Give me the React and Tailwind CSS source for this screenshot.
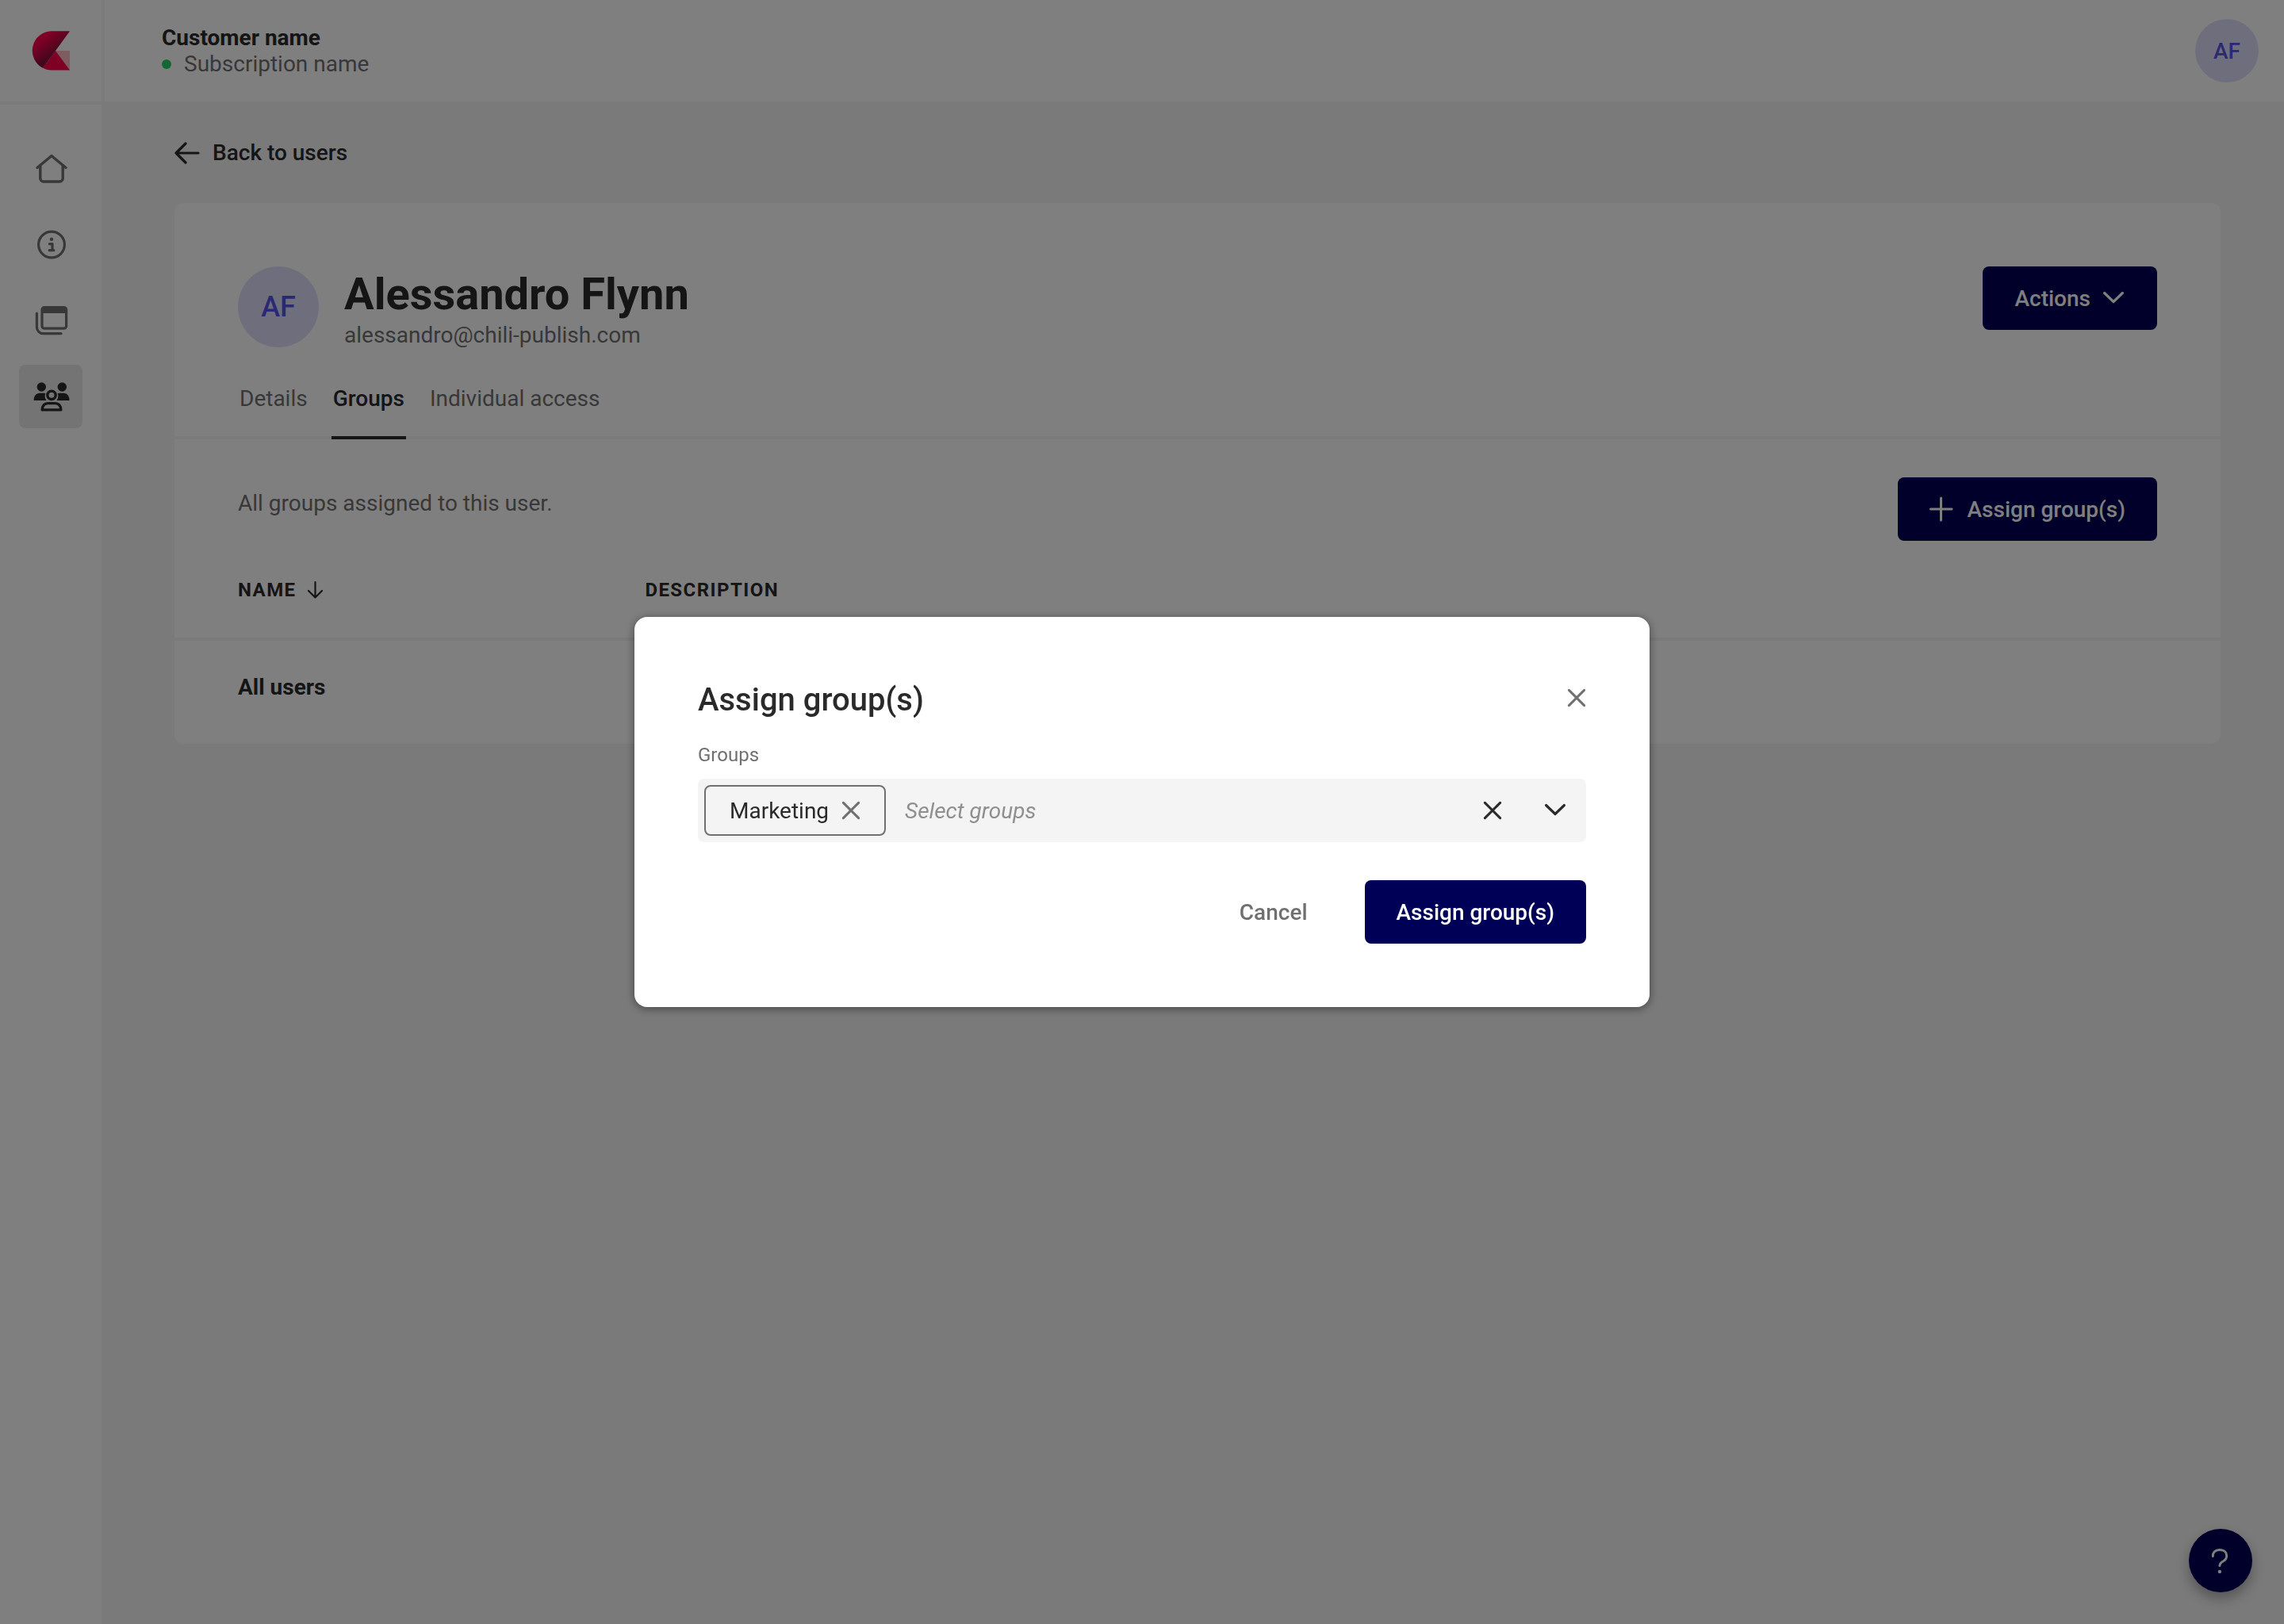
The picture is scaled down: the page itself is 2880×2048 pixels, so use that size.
import React, { useState } from "react";

const navItems = [
    { id: "home", label: "Home", icon: HomeIcon },
    { id: "info", label: "Information", icon: InfoIcon },
    { id: "environments", label: "Environments", icon: WindowsIcon },
    { id: "users", label: "Users", icon: UsersIcon },
];

const tabs = ["Details", "Groups", "Individual access"];

const rows = [{ name: "All users", description: "" }];

function Logo() {
    return (
        <svg className="h-[50px] w-12" viewBox="0 0 48 50" fill="none" aria-hidden="true">
            <defs>
                <linearGradient id="logo-fold" x1="8" y1="10" x2="25" y2="32" gradientUnits="userSpaceOnUse">
                    <stop offset="0.15" stopColor="#ff004b" />
                    <stop offset="1" stopColor="#86103c" />
                </linearGradient>
            </defs>
            <path d="M30 25H48V50Z" fill="#ff7f96" fillOpacity="0.55" />
            <path d="M30 25L48 49.500H24.500C20.500 49.500 17 48.500 14 46.500Z" fill="#ff004b" />
            <path d="M24.700 0.300H48L30 25L14 46.700A24.600 24.600 0 0 1 24.700 0.300Z" fill="url(#logo-fold)" />
        </svg>
    );
}

function HomeIcon() {
    return (
        <svg className="size-12" viewBox="0 0 48 48" fill="none" stroke="currentColor" strokeWidth="3.4" strokeLinecap="round" strokeLinejoin="round" aria-hidden="true">
            <path d="M7 23.500L25 8.500L43 23.500" />
            <path d="M10.800 20.500V37A4 4 0 0 0 14.800 41H35.200A4 4 0 0 0 39.200 37V20.500" />
        </svg>
    );
}

function InfoIcon() {
    return (
        <svg className="size-12" viewBox="0 0 48 48" fill="none" stroke="currentColor" strokeWidth="3.200" strokeLinecap="round" strokeLinejoin="round" aria-hidden="true">
            <circle cx="25" cy="24.500" r="16.400" />
            <path d="M22.400 23.700H26V31.700M22.200 31.700H27.800" />
            <circle cx="25" cy="17.700" r="2.200" fill="currentColor" stroke="none" />
        </svg>
    );
}

function WindowsIcon() {
    return (
        <svg className="size-12" viewBox="0 0 48 48" fill="none" stroke="currentColor" strokeWidth="3.200" strokeLinecap="round" aria-hidden="true">
            <rect x="13" y="7.600" width="30.600" height="26.600" rx="3" />
            <path d="M13 10.500A3 3 0 0 1 16 7.500H40.600A3 3 0 0 1 43.600 10.500V15H13Z" fill="currentColor" stroke="none" />
            <path d="M6.400 15V32.500A8.200 8.200 0 0 0 14.600 40.700H37" />
        </svg>
    );
}

function UsersIcon() {
    return (
        <svg className="size-12" viewBox="0 0 48 48" fill="currentColor" aria-hidden="true">
            <circle cx="12.300" cy="12" r="5.700" />
            <circle cx="38.300" cy="12" r="5.700" />
            <path d="M2.700 29C2.500 23.500 5.500 19.700 10 19.700H14.500C16 19.700 17.300 20 17.300 20C16 23.500 16.700 26.300 18.500 29Z" />
            <path d="M47.500 29C47.700 23.500 44.700 19.700 40.200 19.700H35.700C34.200 19.700 32.700 20 32.700 20C34 23.500 33.300 26.300 31.500 29Z" />
            <circle cx="25" cy="22.300" r="5.200" fill="none" stroke="currentColor" strokeWidth="3.400" />
            <path d="M13.200 40.900C13.200 35.500 16.500 32.600 20 32.600H30C33.500 32.600 36.800 35.500 36.800 40.900Z" fill="none" stroke="currentColor" strokeWidth="3.400" strokeLinejoin="round" />
        </svg>
    );
}

function CloseIcon() {
    return (
        <svg className="size-6" viewBox="0 0 24 24" fill="none" stroke="currentColor" strokeWidth="3" strokeLinecap="round" aria-hidden="true">
            <path d="M2.400 2.400L21.600 21.600M21.600 2.400L2.400 21.600" />
        </svg>
    );
}

function ChevronIcon() {
    return (
        <svg className="size-7" viewBox="0 0 28 28" fill="none" stroke="currentColor" strokeWidth="3.200" strokeLinecap="round" strokeLinejoin="round" aria-hidden="true">
            <path d="M1.600 7.500L13 18.500L24.400 7.500" />
        </svg>
    );
}

function Avatar({ className }) {
    return (
        <span className={`flex shrink-0 items-center justify-center rounded-full bg-[#dfddfb] font-medium text-[#5852e8] ${className}`}>
            AF
        </span>
    );
}

function Sidebar() {
    return (
        <aside className="w-32 shrink-0 bg-white">
            <div className="flex h-[132px] items-center justify-center border-b-4 border-[#f4f4f4]">
                <Logo />
            </div>
            <nav className="flex flex-col items-center gap-4 pt-10">
                {navItems.map((item) => {
                    const Icon = item.icon;
                    const active = item.id === "users";
                    return (
                        <a
                            key={item.id}
                            href={`#${item.id}`}
                            aria-label={item.label}
                            className={`flex size-20 items-center justify-center rounded-lg ${active ? "bg-[#e8e8e8] text-[#2a2a2a]" : "text-[#707070]"}`}
                        >
                            <Icon />
                        </a>
                    );
                })}
            </nav>
        </aside>
    );
}

function TopBar() {
    return (
        <header className="flex h-32 items-center justify-between border-l-4 border-[#f4f4f4] bg-white pr-8 pl-[72px]">
            <div>
                <p className="font-bold">Customer name</p>
                <p className="flex items-center gap-4 text-[#707070]">
                    <span className="size-3 rounded-full bg-[#22d167]"></span>
                    Subscription name
                </p>
            </div>
            <Avatar className="size-20" />
        </header>
    );
}

function UserCard() {
    return (
        <section className="mt-[47px] rounded-xl bg-white">
            <div className="flex items-start justify-between px-20 pt-20">
                <div className="flex gap-8">
                    <Avatar className="size-[102px] text-[36px]" />
                    <div>
                        <h1 className="text-[56px] leading-[70px] font-bold">Alessandro Flynn</h1>
                        <p className="text-[#707070]">alessandro@chili-publish.com</p>
                    </div>
                </div>
                <button className="flex h-20 items-center gap-4 rounded-lg bg-[#000056] px-10 font-medium text-white">
                    Actions
                    <ChevronIcon />
                </button>
            </div>

            <div role="tablist" className="mt-[47px] flex gap-7 border-b-4 border-[#f4f4f4] px-20">
                {tabs.map((tab) => (
                    <button
                        key={tab}
                        role="tab"
                        aria-selected={tab === "Groups"}
                        className={`-mb-1 border-b-4 px-0.5 pb-[31px] ${tab === "Groups" ? "border-[#2a2a2a] font-medium" : "border-transparent text-[#707070]"}`}
                    >
                        {tab}
                    </button>
                ))}
            </div>

            <div className="flex items-start justify-between px-20 pt-12">
                <p className="mt-4 text-[#707070]">All groups assigned to this user.</p>
                <button className="flex h-20 items-center gap-4 rounded-lg bg-[#000056] px-10 font-medium text-white">
                    <svg className="size-8" viewBox="0 0 32 32" fill="none" stroke="currentColor" strokeWidth="3" strokeLinecap="round" aria-hidden="true">
                        <path d="M14.500 2V30M1.500 16H28" />
                    </svg>
                    Assign group(s)
                </button>
            </div>

            <table className="w-full text-left">
                <thead>
                    <tr className="border-b-4 border-[#f4f4f4] text-[24px] leading-7 tracking-[0.06em]">
                        <th className="w-[23%] pt-12 pb-[46px] pl-20 font-bold">
                            <button className="flex items-center gap-3 tracking-[0.06em]">
                                NAME
                                <svg className="size-6" viewBox="0 0 24 24" fill="none" stroke="currentColor" strokeWidth="2.200" strokeLinecap="round" strokeLinejoin="round" aria-hidden="true">
                                    <path d="M11.500 2V21M3 13L11.500 21.500L20 13" />
                                </svg>
                            </button>
                        </th>
                        <th className="pt-12 pb-[46px] font-bold">DESCRIPTION</th>
                    </tr>
                </thead>
                <tbody>
                    {rows.map((row) => (
                        <tr key={row.name}>
                            <td className="pt-[42px] pb-[55px] pl-20 font-bold">{row.name}</td>
                            <td>{row.description}</td>
                        </tr>
                    ))}
                </tbody>
            </table>
        </section>
    );
}

function AssignGroupsModal() {
    const [query, setQuery] = useState("");

    return (
        <div className="fixed inset-0 z-20 flex items-center justify-center bg-black/50">
            <div role="dialog" aria-modal="true" aria-labelledby="assign-title" className="w-full max-w-[1280px] rounded-2xl bg-white p-20 shadow-[0_2px_12px_rgba(0,0,0,0.45)]">
                <div className="flex items-start justify-between">
                    <h2 id="assign-title" className="text-[40px] leading-[49px] font-medium">Assign group(s)</h2>
                    <button aria-label="Close" className="mt-2.5 text-[#707070]">
                        <CloseIcon />
                    </button>
                </div>

                <label htmlFor="groups" className="mt-[31px] block text-[24px] leading-7 text-[#707070]">Groups</label>
                <div className="mt-4 flex h-20 items-center rounded-lg bg-[#f4f4f4] pr-6 pl-2">
                    <span className="flex h-16 items-center gap-4 rounded-lg border-2 border-[#707070] px-[30px]">
                        Marketing
                        <button aria-label="Remove Marketing" className="text-[#707070]">
                            <CloseIcon />
                        </button>
                    </span>
                    <input
                        id="groups"
                        type="text"
                        value={query}
                        onChange={(e) => setQuery(e.target.value)}
                        placeholder="Select groups"
                        className="ml-6 min-w-0 flex-1 bg-transparent outline-none placeholder:text-[#8f8f8f] placeholder:italic"
                    />
                    <div className="flex items-center gap-[54px]">
                        <button aria-label="Clear all">
                            <CloseIcon />
                        </button>
                        <button aria-label="Show groups">
                            <ChevronIcon />
                        </button>
                    </div>
                </div>

                <div className="mt-12 flex justify-end gap-8">
                    <button className="h-20 px-10 font-medium text-[#707070]">Cancel</button>
                    <button className="h-20 rounded-lg bg-[#000056] px-10 font-medium text-white">Assign group(s)</button>
                </div>
            </div>
        </div>
    );
}

export default function App() {
    return (
        <div className="flex min-h-screen bg-[#f4f4f4] font-['Roboto',sans-serif] text-[28px] leading-[33px] text-[#2a2a2a]">
            <Sidebar />
            <div className="min-w-0 flex-1">
                <TopBar />
                <main className="pt-12 pr-20 pb-20 pl-[92px]">
                    <a href="#users" className="flex w-fit items-center gap-4 font-medium">
                        <svg className="size-8" viewBox="0 0 32 32" fill="none" stroke="currentColor" strokeWidth="3.200" strokeLinecap="round" strokeLinejoin="round" aria-hidden="true">
                            <path d="M14 4L2 16L14 28M2 16H30" />
                        </svg>
                        Back to users
                    </a>
                    <UserCard />
                </main>
            </div>

            <button aria-label="Help" className="fixed right-10 bottom-10 flex size-20 items-center justify-center rounded-full bg-[#000056] text-white shadow-[0_8px_16px_rgba(0,0,0,0.3)]">
                <svg className="size-10" viewBox="0 0 40 40" fill="none" stroke="currentColor" strokeWidth="3" strokeLinecap="round" strokeLinejoin="round" aria-hidden="true">
                    <path d="M10.300 14.500C10.300 9.500 13.500 6.500 18.500 6.500H19.500C24.500 6.500 27.700 9.700 27.700 14C27.700 17 26 19.300 23.500 20.700C20.500 22.400 18.900 23.700 18.900 26.500" />
                    <circle cx="18.900" cy="34" r="2.200" fill="currentColor" stroke="none" />
                </svg>
            </button>

            <AssignGroupsModal />
        </div>
    );
}
